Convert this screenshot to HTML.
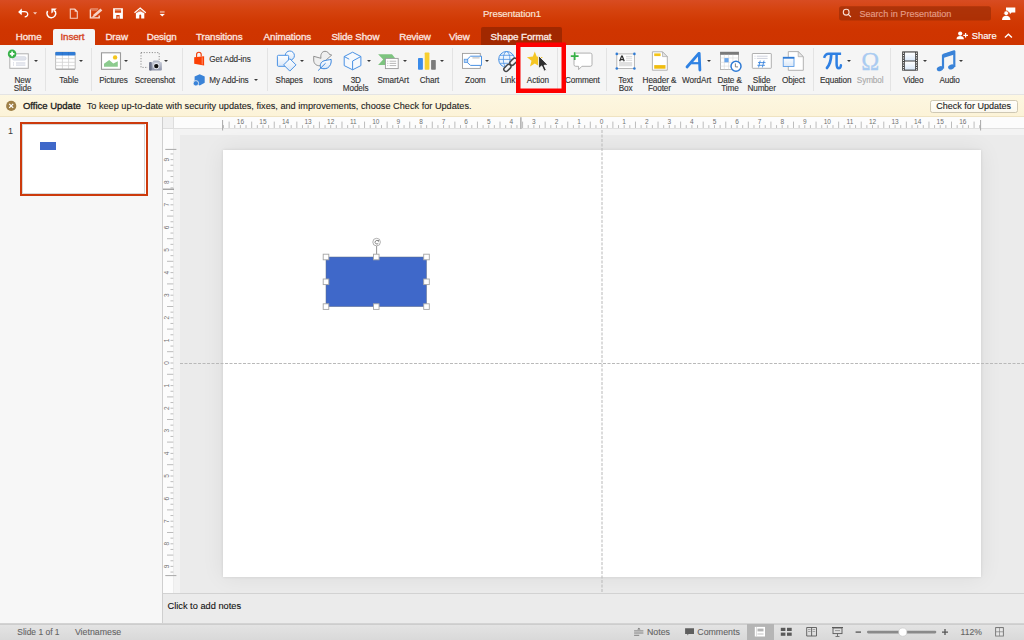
<!DOCTYPE html>
<html><head><meta charset="utf-8">
<style>
*{margin:0;padding:0;box-sizing:border-box}
html,body{width:1024px;height:640px;overflow:hidden;background:#f5f5f5;font-family:"Liberation Sans",sans-serif}
#root{position:absolute;left:0;top:0;width:1024px;height:640px}
.a{position:absolute}
#title{left:0;top:0;width:1024px;height:45px;background:linear-gradient(#d84c22 0px,#d5430f 10px,#d13a04 20px,#cf3500 30px,#ce3400 45px)}
.tab{position:absolute;top:29px;height:16px;font-size:9.8px;letter-spacing:-0.1px;line-height:16px;color:#fde8e0;white-space:nowrap;-webkit-text-stroke:0.3px currentColor}
#ribbon{left:0;top:45px;width:1024px;height:50px;background:#f5f5f5;border-bottom:1px solid #e4e4e4}
.lbl{position:absolute;width:80px;text-align:center;font-size:8.2px;letter-spacing:-0.12px;line-height:8.1px;color:#333;white-space:nowrap;-webkit-text-stroke:0.12px currentColor}
.dd{position:absolute;width:0;height:0;border-left:2.1px solid transparent;border-right:2.1px solid transparent;border-top:2.7px solid #3a3a3a}
#notif{left:0;top:95px;width:1024px;height:22px;background:linear-gradient(#fdf7e1,#fcf3d8);border-bottom:1px solid #efe3c2}
#panel{left:0;top:117px;width:163px;height:506px;background:#f7f7f7;border-right:1px solid #cfcfcf}
#status{left:0;top:623px;width:1024px;height:17px;background:linear-gradient(#dcdcdc,#d9d9d9);border-top:1px solid #c9c9c9}
.st{position:absolute;top:624px;font-size:8.8px;line-height:16px;color:#646464;white-space:nowrap;-webkit-text-stroke:0.1px currentColor}
</style></head>
<body>
<div id="title" class="a"></div>
<svg class="a" style="left:0;top:0" width="1024" height="50" viewBox="0 0 1024 50">
<!-- undo -->
<path d="M18.1 12.1 L21.6 8.5 L21.9 10.9 H24.9 C27.2 10.9 28.4 12.6 28.4 14.3 C28.4 16.2 27 17.5 24.8 17.5 L24.6 16.2 C26.2 16.2 27.1 15.4 27.1 14.3 C27.1 13.2 26.3 12.3 24.9 12.3 L21.9 12.3 L21.6 15.2Z" fill="#fff"/>
<path d="M33.1 12.2 H37.1 L35.1 14.5Z" fill="#f6cdbf"/>
<!-- redo -->
<path d="M47.6 11 A4.4 4.4 0 1 0 55.4 11.6 L53.5 10.4" fill="none" stroke="#fff" stroke-width="1.5"/>
<path d="M51.4 8.6 H56.8 L55.2 10.1 L52.9 10.1 L52.9 12.3 L51.4 13.4Z" fill="#fff"/>
<!-- new doc (dim) -->
<path d="M70.3 9.1 H74.8 L77.3 11.6 V18.3 H70.3Z" fill="none" stroke="rgba(255,255,255,0.75)" stroke-width="1.1"/>
<path d="M74.6 9.1 V11.8 H77.3Z" fill="rgba(255,255,255,0.7)"/>
<!-- edit -->
<path d="M90.4 9.5 V17.9 H99.2 V15.5" fill="none" stroke="#f9ded5" stroke-width="1.4"/>
<path d="M90.4 9 H98.2" stroke="rgba(255,255,255,0.55)" stroke-width="1.1"/>
<path d="M91.6 10.6 H97.2" stroke="rgba(255,255,255,0.35)" stroke-width="0.8"/>
<path d="M92.8 17.1 L93.6 14.4 L100.5 8.6 L102.3 10.5 L95.5 16.3Z" fill="#f7d3c7"/>
<path d="M94.5 16.5 L91.8 16.7" stroke="rgba(255,255,255,0.6)" stroke-width="0.8"/>
<!-- save -->
<path d="M113.1 8.3 H122.9 V18.7 H113.1Z M114.9 9.5 V12.7 H121.1 V9.5Z M116.3 15 V18.7 H119.6 V15Z" fill="#fff" fill-rule="evenodd"/>
<path d="M115 10.6 H121" stroke="rgba(255,255,255,0.45)" stroke-width="0.7"/>
<rect x="117.5" y="16.4" width="1.1" height="2.3" fill="#fff"/>
<!-- home -->
<path d="M134.5 12.8 L140.2 8.1 L145.8 12.8" fill="none" stroke="#fff" stroke-width="1.2"/>
<path d="M135.9 13.6 L140.2 10 L144.4 13.6" fill="none" stroke="rgba(255,255,255,0.5)" stroke-width="0.8"/>
<path d="M135.9 13.3 L140.2 11.2 L144.3 13.3 V18.5 H141.2 V15.4 A0.95 0.95 0 0 0 139.3 15.4 V18.5 H135.9Z" fill="#fff"/>
<!-- customize -->
<path d="M159.9 11.4 H164.6 M159.9 12.7 H164.6" stroke="rgba(255,255,255,0.55)" stroke-width="0.9"/>
<path d="M159.7 14 H164.8 L162.25 16.6Z" fill="#fff"/>
<!-- search box -->
<rect x="839" y="6.3" width="152" height="14.2" rx="2.5" fill="#9e2c06" fill-opacity="0.72"/>
<circle cx="846.2" cy="12.2" r="2.9" fill="none" stroke="#fbe0d6" stroke-width="1.1"/>
<path d="M848.3 14.3 L850.6 16.6" stroke="#fbe0d6" stroke-width="1.2" stroke-linecap="round"/>
<!-- person feedback -->
<path d="M1006 7.5 H1015.3 V12.6 H1011.6 L1009.8 14.3 V12.6 H1006Z" fill="#fff"/>
<circle cx="1006.2" cy="13.2" r="2.4" fill="#fff" stroke="#d03a05" stroke-width="0.8"/>
<path d="M1002 19.9 C1002 17 1004 15.8 1006.2 15.8 C1008.4 15.8 1010.4 17 1010.4 19.9Z" fill="#fff"/>
<!-- share icon -->
<circle cx="960.2" cy="33.6" r="2.1" fill="#fff"/>
<path d="M956.5 39.2 C956.5 37 958 36.1 960.2 36.1 C962.4 36.1 963.9 37 963.9 39.2Z" fill="#fff"/>
<path d="M965.6 33 V37.6 M963.3 35.3 H968" stroke="#fff" stroke-width="1.2"/>
<path d="M1004.9 37.5 L1008.4 34.2 L1011.9 37.5" fill="none" stroke="#fff" stroke-width="1.4"/>
</svg>

<div class="a" style="left:53px;top:29px;width:41.5px;height:16px;background:#f5f5f5;border-radius:2px 2px 0 0"></div>
<div class="a" style="left:481px;top:27px;width:80.6px;height:18px;background:#a12800;border-radius:2px 2px 0 0"></div>
<div class="tab" style="left:15.8px">Home</div>
<div class="tab" style="left:60.5px;color:#d4431c;-webkit-text-stroke:0.35px #d4431c">Insert</div>
<div class="tab" style="left:105.4px">Draw</div>
<div class="tab" style="left:146.7px">Design</div>
<div class="tab" style="left:196px">Transitions</div>
<div class="tab" style="left:263.6px">Animations</div>
<div class="tab" style="left:331.4px">Slide Show</div>
<div class="tab" style="left:399.2px">Review</div>
<div class="tab" style="left:449px">View</div>
<div class="tab" style="left:490.6px;color:#fdeee8">Shape Format</div>
<div class="a" style="left:483px;top:5.8px;font-size:9.6px;letter-spacing:-0.1px;line-height:16px;color:#fbe6dc;white-space:nowrap;-webkit-text-stroke:0.15px currentColor">Presentation1</div>
<div class="a" style="left:859.4px;top:5.5px;font-size:9.1px;line-height:16px;color:#e59c86;white-space:nowrap;-webkit-text-stroke:0.15px currentColor">Search in Presentation</div>
<div class="a" style="left:971.7px;top:28px;font-size:9.4px;line-height:16px;color:#fff;white-space:nowrap;-webkit-text-stroke:0.15px currentColor">Share</div>
<div id="ribbon" class="a"></div>
<div class="a" style="left:45.0px;top:48px;width:1px;height:43px;background:#e3e3e3"></div>
<div class="a" style="left:91.0px;top:48px;width:1px;height:43px;background:#e3e3e3"></div>
<div class="a" style="left:182.0px;top:48px;width:1px;height:43px;background:#e3e3e3"></div>
<div class="a" style="left:266.5px;top:48px;width:1px;height:43px;background:#e3e3e3"></div>
<div class="a" style="left:452.0px;top:48px;width:1px;height:43px;background:#e3e3e3"></div>
<div class="a" style="left:557.0px;top:48px;width:1px;height:43px;background:#e3e3e3"></div>
<div class="a" style="left:606.0px;top:48px;width:1px;height:43px;background:#e3e3e3"></div>
<div class="a" style="left:813.0px;top:48px;width:1px;height:43px;background:#e3e3e3"></div>
<div class="a" style="left:890.1px;top:48px;width:1px;height:43px;background:#e3e3e3"></div>
<div class="lbl" style="left:-17.45px;top:76.50px">New</div>
<div class="lbl" style="left:-17.45px;top:84.60px">Slide</div>
<div class="lbl" style="left:28.85px;top:76.50px">Table</div>
<div class="lbl" style="left:73.45px;top:76.50px">Pictures</div>
<div class="lbl" style="left:114.90px;top:76.50px">Screenshot</div>
<div class="lbl" style="left:249.15px;top:76.50px">Shapes</div>
<div class="lbl" style="left:282.65px;top:76.50px">Icons</div>
<div class="lbl" style="left:315.75px;top:76.50px">3D</div>
<div class="lbl" style="left:315.65px;top:84.60px">Models</div>
<div class="lbl" style="left:353.15px;top:76.50px">SmartArt</div>
<div class="lbl" style="left:389.55px;top:76.50px">Chart</div>
<div class="lbl" style="left:435.35px;top:76.50px">Zoom</div>
<div class="lbl" style="left:467.95px;top:76.50px">Link</div>
<div class="lbl" style="left:497.85px;top:76.50px">Action</div>
<div class="lbl" style="left:542.35px;top:76.50px">Comment</div>
<div class="lbl" style="left:585.55px;top:76.50px">Text</div>
<div class="lbl" style="left:585.55px;top:84.60px">Box</div>
<div class="lbl" style="left:619.45px;top:76.50px">Header &amp;</div>
<div class="lbl" style="left:619.45px;top:84.60px">Footer</div>
<div class="lbl" style="left:656.65px;top:76.50px">WordArt</div>
<div class="lbl" style="left:689.65px;top:76.50px">Date &amp;</div>
<div class="lbl" style="left:689.90px;top:84.60px">Time</div>
<div class="lbl" style="left:721.65px;top:76.50px">Slide</div>
<div class="lbl" style="left:721.65px;top:84.60px">Number</div>
<div class="lbl" style="left:753.45px;top:76.50px">Object</div>
<div class="lbl" style="left:795.65px;top:76.50px">Equation</div>
<div class="lbl" style="left:830.15px;top:76.50px;color:#a9a9a9">Symbol</div>
<div class="lbl" style="left:873.35px;top:76.50px">Video</div>
<div class="lbl" style="left:909.55px;top:76.50px">Audio</div>
<div class="lbl" style="left:209.25px;top:56.1px;width:auto;text-align:left">Get Add-ins</div>
<div class="lbl" style="left:209.25px;top:77.3px;width:auto;text-align:left">My Add-ins</div>
<div class="dd" style="left:33.90px;top:60.10px"></div>
<div class="dd" style="left:78.60px;top:60.10px"></div>
<div class="dd" style="left:124.20px;top:60.10px"></div>
<div class="dd" style="left:164.30px;top:60.10px"></div>
<div class="dd" style="left:254.30px;top:79.30px"></div>
<div class="dd" style="left:299.80px;top:60.10px"></div>
<div class="dd" style="left:367.40px;top:60.10px"></div>
<div class="dd" style="left:402.90px;top:60.10px"></div>
<div class="dd" style="left:439.60px;top:60.10px"></div>
<div class="dd" style="left:485.30px;top:60.10px"></div>
<div class="dd" style="left:706.90px;top:60.10px"></div>
<div class="dd" style="left:847.10px;top:60.10px"></div>
<div class="dd" style="left:923.00px;top:60.10px"></div>
<div class="dd" style="left:959.40px;top:60.10px"></div>
<div id="notif" class="a"></div>
<div id="panel" class="a"></div>
<svg class="a" style="left:0;top:95px" width="24" height="22"><circle cx="11.2" cy="10.9" r="5.1" fill="#9e7f46"/><path d="M9.2 8.9 L13.2 12.9 M13.2 8.9 L9.2 12.9" stroke="#fff" stroke-width="1.3"/></svg>
<div class="a" style="left:22.9px;top:101.3px;font-size:9.5px;line-height:10px;color:#1c1c1c;-webkit-text-stroke:0.32px currentColor;white-space:nowrap">Office Update</div>
<div class="a" style="left:86.7px;top:101.3px;font-size:9.18px;line-height:10px;color:#1c1c1c;-webkit-text-stroke:0.1px currentColor;white-space:nowrap">To keep up-to-date with security updates, fixes, and improvements, choose Check for Updates.</div>
<div class="a" style="left:929.7px;top:99.5px;width:88px;height:13.2px;border:1px solid #cfc8b4;border-radius:2.5px;background:linear-gradient(#fffefa,#fbf8ee)"></div>
<div class="a" style="left:936.3px;top:101.3px;font-size:9.03px;line-height:10px;color:#1c1c1c;-webkit-text-stroke:0.1px currentColor;white-space:nowrap">Check for Updates</div>
<div class="a" style="left:8px;top:125.5px;font-size:9px;line-height:10px;color:#3a3a3a">1</div>
<div class="a" style="left:20px;top:121.6px;width:127.7px;height:74.4px;border:2.3px solid #cc3a0c;background:#fff"></div>
<div class="a" style="left:22.3px;top:123.9px;width:123.1px;height:69.8px;border:1px solid #d8d8d8"></div>
<div class="a" style="left:39.8px;top:141.6px;width:16.2px;height:8.6px;background:#3f68c9"></div>
<div class="a" style="left:163px;top:117px;width:11px;height:12px;background:#f0f0f0;border-right:1px solid #dedede;border-bottom:1px solid #dedede"></div>
<div class="a" style="left:174px;top:117px;width:850px;height:12px;background:#fcfcfc;border-bottom:1px solid #e0e0e0"></div>
<div class="a" style="left:163px;top:129px;width:11px;height:464px;background:#fcfcfc;border-right:1px solid #ececec"></div>
<div class="a" style="left:174px;top:129px;width:850px;height:464px;background:#f3f3f3;overflow:hidden"><div class="a" style="left:6.4px;top:5.8px;width:850px;height:470px;background:#ebebeb"></div><div class="a" style="left:48.6px;top:20.6px;width:758.4px;height:427px;background:#fff;box-shadow:0 0 3px rgba(0,0,0,0.10),0 0 22px rgba(0,0,0,0.07)"></div></div>
<svg class="a" style="left:0;top:0" width="1024" height="640" viewBox="0 0 1024 640"><path d="M602 130 V593" stroke="#b9b9b9" stroke-width="1" stroke-dasharray="3 1.5"/><path d="M180 363.5 H1024" stroke="#b9b9b9" stroke-width="1" stroke-dasharray="3 1.5"/><path d="M223.47 125.1 V128 M229.11 121.6 V128 M234.76 125.1 V128 M240.40 125.1 V128 M246.04 125.1 V128 M251.69 121.6 V128 M257.33 125.1 V128 M262.98 125.1 V128 M268.62 125.1 V128 M274.26 121.6 V128 M279.91 125.1 V128 M285.55 125.1 V128 M291.19 125.1 V128 M296.84 121.6 V128 M302.48 125.1 V128 M308.13 125.1 V128 M313.77 125.1 V128 M319.41 121.6 V128 M325.06 125.1 V128 M330.70 125.1 V128 M336.34 125.1 V128 M341.99 121.6 V128 M347.63 125.1 V128 M353.28 125.1 V128 M358.92 125.1 V128 M364.56 121.6 V128 M370.21 125.1 V128 M375.85 125.1 V128 M381.49 125.1 V128 M387.14 121.6 V128 M392.78 125.1 V128 M398.43 125.1 V128 M404.07 125.1 V128 M409.71 121.6 V128 M415.36 125.1 V128 M421.00 125.1 V128 M426.64 125.1 V128 M432.29 121.6 V128 M437.93 125.1 V128 M443.58 125.1 V128 M449.22 125.1 V128 M454.86 121.6 V128 M460.51 125.1 V128 M466.15 125.1 V128 M471.79 125.1 V128 M477.44 121.6 V128 M483.08 125.1 V128 M488.73 125.1 V128 M494.37 125.1 V128 M500.01 121.6 V128 M505.66 125.1 V128 M511.30 125.1 V128 M516.94 125.1 V128 M522.59 121.6 V128 M528.23 125.1 V128 M533.88 125.1 V128 M539.52 125.1 V128 M545.16 121.6 V128 M550.81 125.1 V128 M556.45 125.1 V128 M562.09 125.1 V128 M567.74 121.6 V128 M573.38 125.1 V128 M579.02 125.1 V128 M584.67 125.1 V128 M590.31 121.6 V128 M595.96 125.1 V128 M601.60 125.1 V128 M607.24 125.1 V128 M612.89 121.6 V128 M618.53 125.1 V128 M624.18 125.1 V128 M629.82 125.1 V128 M635.46 121.6 V128 M641.11 125.1 V128 M646.75 125.1 V128 M652.39 125.1 V128 M658.04 121.6 V128 M663.68 125.1 V128 M669.33 125.1 V128 M674.97 125.1 V128 M680.61 121.6 V128 M686.26 125.1 V128 M691.90 125.1 V128 M697.54 125.1 V128 M703.19 121.6 V128 M708.83 125.1 V128 M714.48 125.1 V128 M720.12 125.1 V128 M725.76 121.6 V128 M731.41 125.1 V128 M737.05 125.1 V128 M742.69 125.1 V128 M748.34 121.6 V128 M753.98 125.1 V128 M759.62 125.1 V128 M765.27 125.1 V128 M770.91 121.6 V128 M776.56 125.1 V128 M782.20 125.1 V128 M787.84 125.1 V128 M793.49 121.6 V128 M799.13 125.1 V128 M804.77 125.1 V128 M810.42 125.1 V128 M816.06 121.6 V128 M821.71 125.1 V128 M827.35 125.1 V128 M832.99 125.1 V128 M838.64 121.6 V128 M844.28 125.1 V128 M849.92 125.1 V128 M855.57 125.1 V128 M861.21 121.6 V128 M866.86 125.1 V128 M872.50 125.1 V128 M878.14 125.1 V128 M883.79 121.6 V128 M889.43 125.1 V128 M895.08 125.1 V128 M900.72 125.1 V128 M906.36 121.6 V128 M912.01 125.1 V128 M917.65 125.1 V128 M923.29 125.1 V128 M928.94 121.6 V128 M934.58 125.1 V128 M940.23 125.1 V128 M945.87 125.1 V128 M951.51 121.6 V128 M957.16 125.1 V128 M962.80 125.1 V128 M968.44 125.1 V128 M974.09 121.6 V128 M979.73 125.1 V128" stroke="#b4b4b4" stroke-width="0.9"/><path d="M222.6 120 V130.5 M980.6 120 V130.5" stroke="#a8a8a8" stroke-width="1"/><path d="M520.9 117.2 V128.8" stroke="#999" stroke-width="1.2"/><g font-family="Liberation Sans" font-size="6.5" fill="#707070"><text x="240.40" y="123.7" text-anchor="middle">16</text><text x="262.98" y="123.7" text-anchor="middle">15</text><text x="285.55" y="123.7" text-anchor="middle">14</text><text x="308.13" y="123.7" text-anchor="middle">13</text><text x="330.70" y="123.7" text-anchor="middle">12</text><text x="353.28" y="123.7" text-anchor="middle">11</text><text x="375.85" y="123.7" text-anchor="middle">10</text><text x="398.43" y="123.7" text-anchor="middle">9</text><text x="421.00" y="123.7" text-anchor="middle">8</text><text x="443.58" y="123.7" text-anchor="middle">7</text><text x="466.15" y="123.7" text-anchor="middle">6</text><text x="488.73" y="123.7" text-anchor="middle">5</text><text x="511.30" y="123.7" text-anchor="middle">4</text><text x="533.88" y="123.7" text-anchor="middle">3</text><text x="556.45" y="123.7" text-anchor="middle">2</text><text x="579.02" y="123.7" text-anchor="middle">1</text><text x="601.60" y="123.7" text-anchor="middle">0</text><text x="624.18" y="123.7" text-anchor="middle">1</text><text x="646.75" y="123.7" text-anchor="middle">2</text><text x="669.33" y="123.7" text-anchor="middle">3</text><text x="691.90" y="123.7" text-anchor="middle">4</text><text x="714.48" y="123.7" text-anchor="middle">5</text><text x="737.05" y="123.7" text-anchor="middle">6</text><text x="759.62" y="123.7" text-anchor="middle">7</text><text x="782.20" y="123.7" text-anchor="middle">8</text><text x="804.77" y="123.7" text-anchor="middle">9</text><text x="827.35" y="123.7" text-anchor="middle">10</text><text x="849.92" y="123.7" text-anchor="middle">11</text><text x="872.50" y="123.7" text-anchor="middle">12</text><text x="895.08" y="123.7" text-anchor="middle">13</text><text x="917.65" y="123.7" text-anchor="middle">14</text><text x="940.23" y="123.7" text-anchor="middle">15</text><text x="962.80" y="123.7" text-anchor="middle">16</text></g><path d="M170.5 153.95 H173.3 M170.5 159.60 H173.3 M170.5 165.25 H173.3 M167 170.90 H173.3 M170.5 176.55 H173.3 M170.5 182.20 H173.3 M170.5 187.85 H173.3 M167 193.50 H173.3 M170.5 199.15 H173.3 M170.5 204.80 H173.3 M170.5 210.45 H173.3 M167 216.10 H173.3 M170.5 221.75 H173.3 M170.5 227.40 H173.3 M170.5 233.05 H173.3 M167 238.70 H173.3 M170.5 244.35 H173.3 M170.5 250.00 H173.3 M170.5 255.65 H173.3 M167 261.30 H173.3 M170.5 266.95 H173.3 M170.5 272.60 H173.3 M170.5 278.25 H173.3 M167 283.90 H173.3 M170.5 289.55 H173.3 M170.5 295.20 H173.3 M170.5 300.85 H173.3 M167 306.50 H173.3 M170.5 312.15 H173.3 M170.5 317.80 H173.3 M170.5 323.45 H173.3 M167 329.10 H173.3 M170.5 334.75 H173.3 M170.5 340.40 H173.3 M170.5 346.05 H173.3 M167 351.70 H173.3 M170.5 357.35 H173.3 M170.5 363.00 H173.3 M170.5 368.65 H173.3 M167 374.30 H173.3 M170.5 379.95 H173.3 M170.5 385.60 H173.3 M170.5 391.25 H173.3 M167 396.90 H173.3 M170.5 402.55 H173.3 M170.5 408.20 H173.3 M170.5 413.85 H173.3 M167 419.50 H173.3 M170.5 425.15 H173.3 M170.5 430.80 H173.3 M170.5 436.45 H173.3 M167 442.10 H173.3 M170.5 447.75 H173.3 M170.5 453.40 H173.3 M170.5 459.05 H173.3 M167 464.70 H173.3 M170.5 470.35 H173.3 M170.5 476.00 H173.3 M170.5 481.65 H173.3 M167 487.30 H173.3 M170.5 492.95 H173.3 M170.5 498.60 H173.3 M170.5 504.25 H173.3 M167 509.90 H173.3 M170.5 515.55 H173.3 M170.5 521.20 H173.3 M170.5 526.85 H173.3 M167 532.50 H173.3 M170.5 538.15 H173.3 M170.5 543.80 H173.3 M170.5 549.45 H173.3 M167 555.10 H173.3 M170.5 560.75 H173.3 M170.5 566.40 H173.3 M170.5 572.05 H173.3" stroke="#b4b4b4" stroke-width="0.9"/><path d="M165.3 149.4 H176.4 M165.3 575.6 H176.4" stroke="#a8a8a8" stroke-width="1"/><path d="M163 189.2 H174" stroke="#8a8a8a" stroke-width="1.1"/><g font-family="Liberation Sans" font-size="6.5" fill="#707070"><text transform="translate(168.9 159.60) rotate(-90)" text-anchor="middle">9</text><text transform="translate(168.9 182.20) rotate(-90)" text-anchor="middle">8</text><text transform="translate(168.9 204.80) rotate(-90)" text-anchor="middle">7</text><text transform="translate(168.9 227.40) rotate(-90)" text-anchor="middle">6</text><text transform="translate(168.9 250.00) rotate(-90)" text-anchor="middle">5</text><text transform="translate(168.9 272.60) rotate(-90)" text-anchor="middle">4</text><text transform="translate(168.9 295.20) rotate(-90)" text-anchor="middle">3</text><text transform="translate(168.9 317.80) rotate(-90)" text-anchor="middle">2</text><text transform="translate(168.9 340.40) rotate(-90)" text-anchor="middle">1</text><text transform="translate(168.9 363.00) rotate(-90)" text-anchor="middle">0</text><text transform="translate(168.9 385.60) rotate(-90)" text-anchor="middle">1</text><text transform="translate(168.9 408.20) rotate(-90)" text-anchor="middle">2</text><text transform="translate(168.9 430.80) rotate(-90)" text-anchor="middle">3</text><text transform="translate(168.9 453.40) rotate(-90)" text-anchor="middle">4</text><text transform="translate(168.9 476.00) rotate(-90)" text-anchor="middle">5</text><text transform="translate(168.9 498.60) rotate(-90)" text-anchor="middle">6</text><text transform="translate(168.9 521.20) rotate(-90)" text-anchor="middle">7</text><text transform="translate(168.9 543.80) rotate(-90)" text-anchor="middle">8</text><text transform="translate(168.9 566.40) rotate(-90)" text-anchor="middle">9</text></g><rect x="326" y="257" width="100.5" height="49.6" fill="#3f68c9" stroke="#5e6c86" stroke-width="0.5"/><path d="M376.6 246 V254.5" stroke="#888" stroke-width="0.9"/><circle cx="376.6" cy="242.1" r="3.8" fill="#fff" stroke="#9a9a9a" stroke-width="0.8"/><path d="M378.2 241 A1.8 1.8 0 1 0 378.3 243.3" fill="none" stroke="#666" stroke-width="0.8"/><path d="M377.4 240.3 L379.1 240.2 L378.7 242Z" fill="#666"/><rect x="323.20" y="254.20" width="5.6" height="5.6" fill="#fff" stroke="#a5a5a5" stroke-width="0.9"/><rect x="323.20" y="279.00" width="5.6" height="5.6" fill="#fff" stroke="#a5a5a5" stroke-width="0.9"/><rect x="323.20" y="303.80" width="5.6" height="5.6" fill="#fff" stroke="#a5a5a5" stroke-width="0.9"/><rect x="373.45" y="254.20" width="5.6" height="5.6" fill="#fff" stroke="#a5a5a5" stroke-width="0.9"/><rect x="373.45" y="303.80" width="5.6" height="5.6" fill="#fff" stroke="#a5a5a5" stroke-width="0.9"/><rect x="423.70" y="254.20" width="5.6" height="5.6" fill="#fff" stroke="#a5a5a5" stroke-width="0.9"/><rect x="423.70" y="279.00" width="5.6" height="5.6" fill="#fff" stroke="#a5a5a5" stroke-width="0.9"/><rect x="423.70" y="303.80" width="5.6" height="5.6" fill="#fff" stroke="#a5a5a5" stroke-width="0.9"/></svg>
<div class="a" style="left:163px;top:593px;width:861px;height:30px;background:#ebebeb;border-top:1px solid #d2d2d2"></div>
<div class="a" style="left:167.5px;top:600.6px;font-size:9.25px;line-height:10px;color:#111;white-space:nowrap;-webkit-text-stroke:0.1px currentColor">Click to add notes</div>
<div class="a" style="left:0;top:623px;width:1024px;height:17px;background:linear-gradient(#d9d9d9 0px,#cdcdcd 1px,#cdcdcd 1.6px,#e3e3e3 2.2px,#d9d9d9 17px)"></div>
<div class="a" style="left:747.2px;top:624px;width:26.7px;height:16px;background:#b5b5b5"></div>
<div class="st" style="left:17.3px;top:627px;font-size:8.45px;line-height:10px">Slide 1 of 1</div>
<div class="st" style="left:74.9px;top:627px;font-size:8.8px;line-height:10px">Vietnamese</div>
<div class="st" style="left:647px;top:627px;font-size:8.8px;line-height:10px">Notes</div>
<div class="st" style="left:697.3px;top:627px;font-size:8.8px;line-height:10px">Comments</div>
<div class="st" style="left:960.5px;top:627px;font-size:8.6px;line-height:10px">112%</div>
<svg class="a" style="left:0;top:0" width="1024" height="640" viewBox="0 0 1024 640"><path d="M634.1 630.9 H643.4 M634.1 633 H643.4 M634.1 635.3 H639.2" stroke="#6a6a6a" stroke-width="0.8"/><path d="M637.3 629.4 L638.9 627.7 L640.5 629.4Z" fill="#6a6a6a"/><path d="M685.1 628.2 H694 V633.9 H688.6 L687.4 635.6 V633.9 H685.1Z" fill="#5e5e5e"/><rect x="754.8" y="626.9" width="10.2" height="9.6" fill="#fff"/><rect x="757.5" y="628.6" width="6" height="2.8" fill="#b5b5b5"/><rect x="757.5" y="633" width="6" height="2" fill="#e0e0e0"/><rect x="756.3" y="626.9" width="0.6" height="9.6" fill="#ccc"/><g fill="#5a5a5a"><rect x="780.8" y="627.8" width="4.6" height="3.2"/><rect x="787" y="627.8" width="4.7" height="3.2"/><rect x="780.8" y="632.6" width="4.6" height="3.2"/><rect x="787" y="632.6" width="4.7" height="3.2"/></g><path d="M806.7 627.5 H816.5 V636 H806.7Z M811.6 627.5 V636" fill="none" stroke="#5a5a5a" stroke-width="0.9"/><path d="M808 629.5 H810.6 M808 631.5 H810.6 M812.6 629.5 H815.2 M812.6 631.5 H815.2" stroke="#888" stroke-width="0.7"/><path d="M832 627.5 H843" stroke="#5a5a5a" stroke-width="1"/><rect x="833" y="628" width="9" height="5.6" fill="none" stroke="#5a5a5a" stroke-width="0.9"/><path d="M835 630.6 H840" stroke="#888" stroke-width="0.8"/><path d="M837.5 633.6 V636.2 M835.5 636.5 H839.5" stroke="#5a5a5a" stroke-width="0.8"/><path d="M855.6 632.1 H861" stroke="#555" stroke-width="1.3"/><path d="M868.3 632.1 H935" stroke="#8a8a8a" stroke-width="2.6" stroke-linecap="round"/><circle cx="902.8" cy="632.1" r="4.1" fill="#fff" stroke="#c8c8c8" stroke-width="0.6"/><path d="M942 632.1 H948 M945 629.1 V635.1" stroke="#555" stroke-width="1.3"/><rect x="995.1" y="627.1" width="8.8" height="9.5" rx="0.6" fill="#7a7a7a"/><g fill="#e6e6e6"><rect x="996.1" y="628.1" width="3.1" height="3.4"/><rect x="999.8" y="628.1" width="3.1" height="3.4"/><rect x="996.1" y="632.2" width="3.1" height="3.4"/><rect x="999.8" y="632.2" width="3.1" height="3.4"/></g></svg>
<svg class="a" style="left:0;top:0" width="1024" height="100" viewBox="0 0 1024 100">
<defs>
<linearGradient id="g1" x1="0" y1="0" x2="0" y2="1"><stop offset="0" stop-color="#ffffff"/><stop offset="1" stop-color="#d9e7f8"/></linearGradient>
<linearGradient id="cam" x1="0" y1="0" x2="0" y2="1"><stop offset="0" stop-color="#c6cad6"/><stop offset="1" stop-color="#8f95aa"/></linearGradient>
<linearGradient id="wf" x1="0" y1="0" x2="0" y2="1"><stop offset="0" stop-color="#ffffff"/><stop offset="1" stop-color="#f0f0f0"/></linearGradient>
</defs>
<!-- New Slide -->
<rect x="9.8" y="53.8" width="18.5" height="14.5" fill="#fff" stroke="#b0b0b0" stroke-width="1"/>
<rect x="12.3" y="56.4" width="13.9" height="3.9" rx="1.9" fill="#dfe2ea" stroke="#cdd1dc" stroke-width="0.5"/>
<rect x="16" y="62.3" width="9.4" height="1.4" fill="#d9dce6"/>
<rect x="16" y="64.4" width="9.4" height="1.4" fill="#d9dce6"/>
<rect x="13.2" y="62.3" width="0.8" height="1.2" fill="#c5c9d6"/>
<rect x="13.2" y="64.4" width="0.8" height="1.2" fill="#c5c9d6"/>
<circle cx="12.1" cy="53.9" r="4.3" fill="#38b24a"/>
<path d="M12.1 51.6 V56.2 M9.8 53.9 H14.4" stroke="#fff" stroke-width="1.7"/>
<!-- Table -->
<rect x="55.6" y="52.2" width="19.6" height="17" rx="0.8" fill="#fff" stroke="#b8b8b8" stroke-width="0.9"/>
<rect x="55.3" y="51.9" width="20.1" height="3.6" rx="0.8" fill="#2f7bd5"/>
<path d="M62.4 55.5 V69 M68.6 55.5 V69 M55.6 58.7 H75.2 M55.6 62.3 H75.2 M55.6 65.7 H75.2" stroke="#d2d2d2" stroke-width="0.8"/>
<path d="M62.4 52 V55.5 M68.6 52 V55.5" stroke="#2a6cc0" stroke-width="0.6"/>
<path d="M55.6 69.2 H75.2" stroke="#9a9a9a" stroke-width="0.9"/>
<!-- Pictures -->
<rect x="101.5" y="52.8" width="19" height="16.5" fill="#fff" stroke="#9b9b9b" stroke-width="1.1"/>
<path d="M104 66.8 V63.8 L109.2 60 L113.3 63.6 L117.8 61.3 V66.8Z" fill="#8ccb8e"/>
<circle cx="115.1" cy="57.4" r="2.2" fill="#f4c51c"/>
<!-- Screenshot -->
<rect x="141" y="52.6" width="18.2" height="14.8" fill="none" stroke="#7a7a7a" stroke-width="0.9" stroke-dasharray="1.1 1.6"/>
<rect x="147.8" y="62.1" width="14.4" height="8.5" fill="#f5f5f5"/>
<rect x="149.1" y="62.1" width="12.8" height="8.4" rx="1" fill="url(#cam)"/>
<rect x="149.1" y="62.1" width="2.6" height="8.4" rx="1" fill="#6f758b"/>
<path d="M152.6 62.1 L153.6 60.5 H158.6 L159.6 62.1Z" fill="#b3b8c6"/>
<circle cx="156.3" cy="66.1" r="3.1" fill="#e9ebf1"/>
<circle cx="156.3" cy="66.1" r="2.2" fill="#111"/>
<!-- Get Add-ins -->
<path d="M196.6 57 V54.6 A2.3 2.3 0 0 1 201.2 54.6 V56.6" fill="none" stroke="#f23c05" stroke-width="1.1"/>
<path d="M194.2 57.2 L204.1 56.2 V65.4 L194.2 63.8Z" fill="#fb3f04"/>
<path d="M202.2 57.3 V64.6" stroke="#ffb39a" stroke-width="0.7"/>
<!-- My Add-ins -->
<path d="M199.7 74.2 L204.7 76.6 V82.8 L199.7 85.4 L194.6 82.8 V76.6Z" fill="#3a83d8"/>
<circle cx="195.9" cy="83.3" r="2.7" fill="#3a83d8" stroke="#f5f5f5" stroke-width="0.8"/>
<!-- Shapes -->
<circle cx="289.8" cy="55.6" r="4.6" fill="url(#g1)" stroke="#4a92e4" stroke-width="1"/>
<rect x="277.4" y="55.3" width="11.2" height="11" rx="1" fill="url(#g1)" stroke="#4a92e4" stroke-width="1"/>
<path d="M289.8 58.7 L296 64.9 L289.8 71.1 L283.6 64.9Z" fill="url(#g1)" stroke="#4a92e4" stroke-width="1"/>
<!-- Icons (duck + leaf) -->
<path d="M313.7 56.3 L321 58.3 C320.2 54.8 321.8 51.3 325 51.3 C327.3 51.3 328.8 52.8 329.3 54.3 L331.7 55.1 L326.3 59.8 L322 65.8 H320 C316 65.8 313.7 63.5 313.7 60Z" fill="#efefef" stroke="#7a7a7a" stroke-width="0.8" stroke-linejoin="round"/>
<path d="M320.6 67.9 C319.8 65 320.5 62 324 60.8 C326.5 60 329.5 60 331.1 59.3 C331.6 63 330.5 66.2 327.5 68 C325.5 69 322.5 69 320.6 67.9Z" fill="url(#g1)" stroke="#3b86de" stroke-width="1"/>
<path d="M318.1 70.6 L325.6 63.2" stroke="#3b86de" stroke-width="1"/>
<!-- 3D Models -->
<path d="M352.6 52.2 L360.9 56.5 V65.6 L352.6 69.8 L344.2 65.6 V56.5Z" fill="#f6f9fd" stroke="#4a92e4" stroke-width="1"/>
<path d="M352.6 61 L360.9 56.5 M352.6 61 V69.8 M344.2 56.5 L349.2 59.2" fill="none" stroke="#4a92e4" stroke-width="1"/>
<!-- SmartArt -->
<path d="M378.1 54.2 H392 L396.2 59.4 L392 64.9 H378.1 L383.2 59.5Z" fill="#7dc47f"/>
<rect x="385.4" y="58.4" width="12.8" height="10.2" fill="#fff" stroke="#9a9a9a" stroke-width="0.9"/>
<path d="M387.3 61.2 H388.3 M389.6 61.2 H396.2 M387.3 63.4 H388.3 M389.6 63.4 H396.2 M387.3 65.6 H388.3 M389.6 65.6 H396.2" stroke="#9a9a9a" stroke-width="0.7"/>
<!-- Chart -->
<rect x="418" y="58" width="4.9" height="11.7" rx="0.8" fill="#3a8bea"/>
<rect x="424.7" y="52.5" width="4.7" height="17.2" rx="0.8" fill="#f7cf30"/>
<rect x="431.1" y="60.1" width="4.7" height="9.6" rx="0.6" fill="#7b7b7b"/>
<!-- Zoom -->
<rect x="462.5" y="53.4" width="17.8" height="15" fill="#fff" stroke="#9d9d9d" stroke-width="0.9"/>
<path d="M470.6 56.2 H481.5 V65.4 H470.6 L467.5 62.7 V59.1Z" fill="#fff" stroke="#4a92e4" stroke-width="1"/>
<rect x="464.2" y="59.2" width="3.6" height="3.4" fill="#b9d3f2" stroke="#4a92e4" stroke-width="0.7"/>
<path d="M472.4 57.9 H479.6" stroke="#a5a5a5" stroke-width="0.8"/>
<!-- Link -->
<circle cx="506.6" cy="59.4" r="7.9" fill="#eef5fc" stroke="#4a92e4" stroke-width="1"/>
<path d="M498.7 59.4 H514.5 M499.8 55.3 H513.4 M499.8 63.3 H513.4" stroke="#4a92e4" stroke-width="0.8"/>
<ellipse cx="506.6" cy="59.4" rx="3.3" ry="7.9" fill="none" stroke="#4a92e4" stroke-width="0.8"/>
<path d="M506.5 69.5 L515 61" stroke="#f5f5f5" stroke-width="4.2" stroke-linecap="round"/>
<rect x="505.2" y="63.8" width="4.4" height="8.2" rx="2.2" transform="rotate(45 507.4 67.9)" fill="none" stroke="#464646" stroke-width="1.5"/>
<rect x="511.2" y="57.6" width="4.4" height="8.2" rx="2.2" transform="rotate(45 513.4 61.7)" fill="none" stroke="#464646" stroke-width="1.5"/>
<!-- Action -->
<path d="M534.8 51.5 L536.7 56.6 L542.9 57.2 L538.1 60.7 L539.6 66.6 L534.8 63.4 L530 66.6 L531.5 60.7 L526.9 57.2 L532.9 56.6Z" fill="#f5c623"/>
<path d="M538.6 55.6 V68.6 L541.7 65.9 L544.1 71.2 L546.4 70.2 L544.1 65.3 L548 65.1Z" fill="#2f2f2f" stroke="#fff" stroke-width="0.9" stroke-linejoin="round"/>
<!-- Comment -->
<path d="M576 53.1 H590.3 A1.7 1.7 0 0 1 592 54.8 V64.6 A1.7 1.7 0 0 1 590.3 66.3 H581.9 L578.6 69.6 V66.3 H575.7 A1.7 1.7 0 0 1 574 64.6 V55.8" fill="#fff" stroke="#a9a9a9" stroke-width="0.9"/>
<path d="M574.7 52.3 V60.1 M570.8 56.2 H578.6" stroke="#36b146" stroke-width="1.7"/>
<!-- Text Box -->
<rect x="616.8" y="53.9" width="17.6" height="14.6" fill="#fff" stroke="#b0b0b0" stroke-width="0.9"/>
<rect x="619" y="62" width="13.2" height="4.3" fill="#e0e0e0"/>
<path d="M619.7 61.3 L621.6 56.1 H622.3 L624.2 61.3 M620.5 59.5 H623.4" fill="none" stroke="#2e2e2e" stroke-width="1.25"/>
<path d="M626 56.4 H632.2 M626 58.2 H632.2 M626 60.3 H632.2" stroke="#c0c0c0" stroke-width="0.6"/>
<circle cx="616.8" cy="53.9" r="1.3" fill="#2f7bd5"/><circle cx="634.4" cy="53.9" r="1.3" fill="#2f7bd5"/>
<circle cx="616.8" cy="68.5" r="1.3" fill="#2f7bd5"/><circle cx="634.4" cy="68.5" r="1.3" fill="#2f7bd5"/>
<!-- Header & Footer -->
<path d="M652.4 51.8 H662.5 L667.3 56.6 V70.2 H652.4Z" fill="#fff" stroke="#aaaaaa" stroke-width="0.9"/>
<path d="M662.5 51.8 V56.6 H667.3Z" fill="#e6e6e6" stroke="#aaaaaa" stroke-width="0.7"/>
<rect x="654.2" y="53.4" width="6.4" height="2.7" fill="#f5c518"/>
<rect x="654.2" y="65.1" width="11.3" height="3.6" fill="#f0bd10"/>
<!-- WordArt -->
<path d="M687 67 L698.6 53.6 M699.2 53.4 L699.9 70" fill="none" stroke="#2f82e3" stroke-width="2.8" stroke-linecap="round" stroke-linejoin="round"/><path d="M691.2 63.2 H699.5" stroke="#2f82e3" stroke-width="2.2"/>
<!-- Date & Time -->
<rect x="720.4" y="52.2" width="18.2" height="17.2" fill="#fff" stroke="#a8a8a8" stroke-width="0.8"/>
<rect x="720.1" y="51.9" width="18.8" height="2.9" fill="#7a7a7a"/>
<path d="M724.3 54.8 V69.4 M728.6 54.8 V69.4 M732.9 54.8 V69.4 M720.4 58 H738.6 M720.4 62.3 H738.6 M720.4 66.1 H738.6" stroke="#d8d8d8" stroke-width="0.6"/>
<rect x="724.4" y="58.1" width="4.2" height="4.2" fill="#6aa6ec"/>
<circle cx="736" cy="66.3" r="5" fill="#fff" stroke="#2f7bd5" stroke-width="1.5"/>
<path d="M735.4 63.4 V66.9 H738" fill="none" stroke="#777" stroke-width="0.9"/>
<!-- Slide Number -->
<rect x="752.3" y="53.5" width="19" height="14.8" rx="0.5" fill="#fff" stroke="#a8a8a8" stroke-width="0.9"/>
<path d="M754.5 56.2 H755.5 M756.8 56.2 H767.6 M754.5 58.4 H755.5 M756.8 58.4 H767.6" stroke="#b9bfce" stroke-width="0.7"/>
<path d="M760.2 60.6 L758.6 67.4 M764 60.6 L762.4 67.4 M758 62.6 H765.5 M757.4 65.3 H764.9" stroke="#3b86de" stroke-width="0.9"/>
<!-- Object -->
<path d="M788.3 51.6 H798.2 L803.3 56.7 V70.3 H788.3Z" fill="#fff" stroke="#aaaaaa" stroke-width="0.9"/>
<path d="M798.2 51.6 V56.7 H803.3Z" fill="#e8e8e8" stroke="#aaaaaa" stroke-width="0.7"/>
<rect x="783.2" y="57.2" width="10.8" height="9.3" fill="url(#g1)" stroke="#4a92e4" stroke-width="0.8"/>
<rect x="783" y="57" width="11.2" height="1.7" fill="#2f7bd5"/>
<!-- Equation / Symbol -->
<path d="M824.1 57.8 C825 55 826.3 53.7 828.6 53.7 H841.1" fill="none" stroke="#2f80e3" stroke-width="2.5"/>
<path d="M831.2 54.8 C831 60 829.5 65 827 67.9" fill="none" stroke="#2f80e3" stroke-width="2.8" stroke-linecap="round"/>
<path d="M836.6 54.8 V64 C836.6 67.2 837.6 68.3 838.8 68.3 C840 68.3 840.7 67 840.9 65.3" fill="none" stroke="#2f80e3" stroke-width="2.5" stroke-linecap="round"/>
<text x="861.2" y="69.8" font-family="Liberation Serif" font-size="25" textLength="18" lengthAdjust="spacingAndGlyphs" fill="#a9cbf1" stroke="#a9cbf1" stroke-width="0.3">Ω</text>
<!-- Video -->
<rect x="902.2" y="51.4" width="15.6" height="19.3" fill="#3a3a3a"/>
<rect x="904.8" y="52.5" width="10.4" height="8" fill="url(#g1)"/>
<rect x="904.8" y="61.5" width="10.4" height="8.1" fill="url(#g1)"/>
<g fill="#f0f0f0">
<rect x="903" y="52.6" width="1" height="1.2"/><rect x="903" y="55" width="1" height="1.2"/><rect x="903" y="57.4" width="1" height="1.2"/><rect x="903" y="59.8" width="1" height="1.2"/><rect x="903" y="62.2" width="1" height="1.2"/><rect x="903" y="64.6" width="1" height="1.2"/><rect x="903" y="67" width="1" height="1.2"/><rect x="903" y="69.2" width="1" height="1"/>
<rect x="916" y="52.6" width="1" height="1.2"/><rect x="916" y="55" width="1" height="1.2"/><rect x="916" y="57.4" width="1" height="1.2"/><rect x="916" y="59.8" width="1" height="1.2"/><rect x="916" y="62.2" width="1" height="1.2"/><rect x="916" y="64.6" width="1" height="1.2"/><rect x="916" y="67" width="1" height="1.2"/><rect x="916" y="69.2" width="1" height="1"/>
</g>
<!-- Audio -->
<path d="M943 55 L954.3 51.3 V67" fill="none" stroke="#3a83d8" stroke-width="2.2" stroke-linejoin="round"/>
<path d="M943 54.5 V68.6" stroke="#3a83d8" stroke-width="2.2"/>
<path d="M943.2 54.2 L954.3 50.8 V54.5 L943.2 58Z" fill="#3a83d8"/>
<ellipse cx="940" cy="68.7" rx="3.3" ry="2.4" transform="rotate(-20 940 68.7)" fill="#3a83d8"/>
<ellipse cx="951.3" cy="66.9" rx="3.3" ry="2.4" transform="rotate(-20 951.3 66.9)" fill="#3a83d8"/>
<!-- red highlight box -->
<rect x="518.25" y="44.75" width="45.5" height="46" fill="none" stroke="#fe0000" stroke-width="4.5"/>
</svg>

</body></html>
